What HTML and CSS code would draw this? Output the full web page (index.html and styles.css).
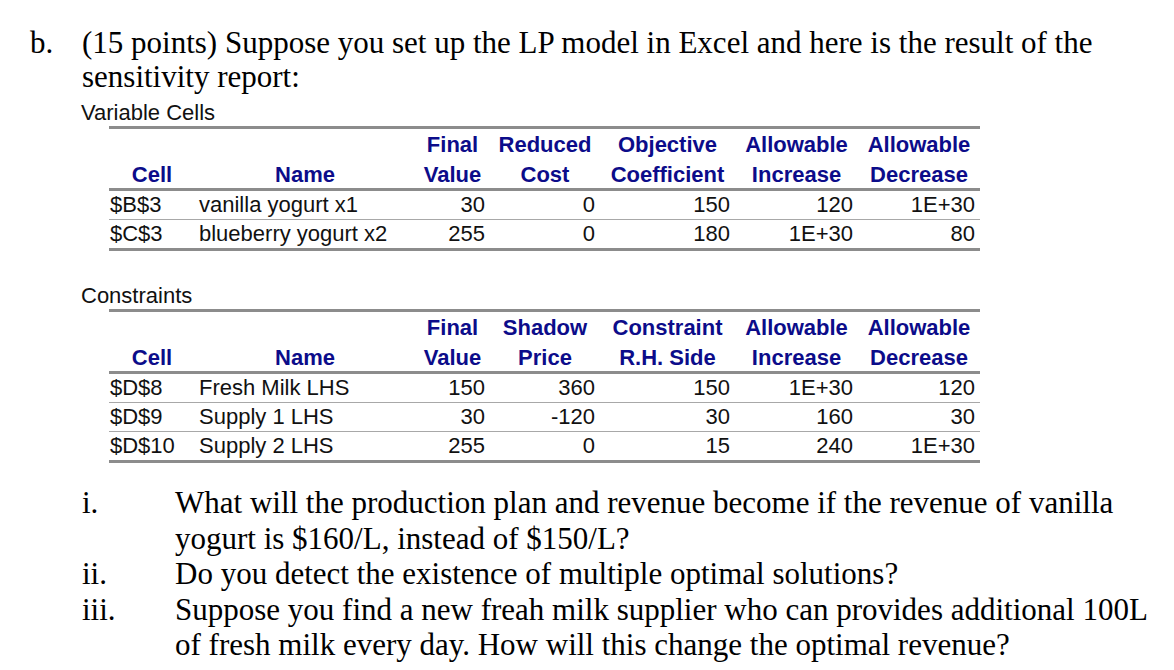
FILE: index.html
```html
<!DOCTYPE html>
<html>
<head>
<meta charset="utf-8">
<link rel="stylesheet" href="styles.css">
</head>
<body>
<div class="page">
  <div class="item">
    <span class="item-label">b.</span>
    <p class="item-text">(15 points) Suppose you set up the LP model in Excel and here is the result of the sensitivity report:</p>
  </div>

  <div class="section-title">Variable Cells</div>
  <table class="report">
    <colgroup>
      <col class="c-cell"><col class="c-name"><col class="c-final"><col class="c-red"><col class="c-obj"><col class="c-inc"><col class="c-dec">
    </colgroup>
    <thead>
      <tr class="h1"><th></th><th></th><th>Final</th><th>Reduced</th><th>Objective</th><th>Allowable</th><th>Allowable</th></tr>
      <tr class="h2"><th>Cell</th><th>Name</th><th>Value</th><th>Cost</th><th>Coefficient</th><th>Increase</th><th>Decrease</th></tr>
    </thead>
    <tbody>
      <tr><td class="l">$B$3</td><td class="n">vanilla yogurt x1</td><td>30</td><td>0</td><td>150</td><td>120</td><td>1E+30</td></tr>
      <tr><td class="l">$C$3</td><td class="n">blueberry yogurt x2</td><td>255</td><td>0</td><td>180</td><td>1E+30</td><td>80</td></tr>
    </tbody>
  </table>

  <div class="section-title s2">Constraints</div>
  <table class="report">
    <colgroup>
      <col class="c-cell"><col class="c-name"><col class="c-final"><col class="c-red"><col class="c-obj"><col class="c-inc"><col class="c-dec">
    </colgroup>
    <thead>
      <tr class="h1"><th></th><th></th><th>Final</th><th>Shadow</th><th>Constraint</th><th>Allowable</th><th>Allowable</th></tr>
      <tr class="h2"><th>Cell</th><th>Name</th><th>Value</th><th>Price</th><th>R.H. Side</th><th>Increase</th><th>Decrease</th></tr>
    </thead>
    <tbody>
      <tr><td class="l">$D$8</td><td class="n">Fresh Milk LHS</td><td>150</td><td>360</td><td>150</td><td>1E+30</td><td>120</td></tr>
      <tr><td class="l">$D$9</td><td class="n">Supply 1 LHS</td><td>30</td><td>-120</td><td>30</td><td>160</td><td>30</td></tr>
      <tr><td class="l">$D$10</td><td class="n">Supply 2 LHS</td><td>255</td><td>0</td><td>15</td><td>240</td><td>1E+30</td></tr>
    </tbody>
  </table>

  <ol class="questions">
    <li class="q"><span class="q-label">i.</span><span class="q-text">What will the production plan and revenue become if the revenue of vanilla yogurt is $160/L, instead of $150/L?</span></li>
    <li class="q"><span class="q-label">ii.</span><span class="q-text">Do you detect the existence of multiple optimal solutions?</span></li>
    <li class="q"><span class="q-label">iii.</span><span class="q-text">Suppose you find a new freah milk supplier who can provides additional 100L of fresh milk every day. How will this change the optimal revenue?</span></li>
  </ol>
</div>
</body>
</html>
```

FILE: styles.css
```css
html, body {
  margin: 0;
  padding: 0;
  background: #ffffff;
}

.page {
  padding: 26px 0 0 30px;
  color: #000000;
  font-family: "Liberation Serif", "Times New Roman", serif;
}

.item {
  display: flex;
  align-items: flex-start;
}

.item-label {
  width: 52px;
  flex: none;
  font-size: 31px;
  line-height: 34px;
}

.item-text {
  margin: 0;
  width: 1040px;
  font-size: 31px;
  line-height: 34px;
}

.section-title {
  font-family: "Liberation Sans", Arial, sans-serif;
  font-size: 22px;
  line-height: 26px;
  margin: 6px 0 0 51px;
  color: #111111;
}

.section-title.s2 {
  margin-top: 32px;
}

.report {
  margin: 0 0 0 79px;
  width: 871px;
  table-layout: fixed;
  border-collapse: collapse;
  font-family: "Liberation Sans", Arial, sans-serif;
  font-size: 22px;
  border-top: 3px solid #8c8c8c;
  border-bottom: 3px solid #8c8c8c;
}

.c-cell { width: 86px; }
.c-name { width: 220px; }
.c-final { width: 75px; }
.c-red { width: 110px; }
.c-obj { width: 135px; }
.c-inc { width: 123px; }
.c-dec { width: 122px; }

.report th {
  color: #0c0c8a;
  font-weight: bold;
  text-align: center;
  padding: 0;
  white-space: nowrap;
}

.report tr.h1 th {
  height: 28px;
  padding-top: 2px;
}

.report tr.h2 th {
  height: 25px;
  padding-top: 3px;
  border-bottom: 3px solid #8c8c8c;
}

.report td {
  height: 28px;
  padding: 0 5px 0 0;
  text-align: right;
  white-space: nowrap;
  border-top: 1px solid #a8a8a8;
  color: #111111;
}

.report tbody tr:first-child td {
  border-top: none;
}

.report td.l {
  text-align: left;
  padding-left: 1px;
}

.report td.n {
  text-align: left;
  padding-left: 4px;
}

.questions {
  list-style: none;
  margin: 22px 0 0 0;
  padding: 0;
}

.q {
  display: flex;
  align-items: flex-start;
  font-size: 31px;
  line-height: 35.5px;
}

.q-label {
  width: 93px;
  flex: none;
  padding-left: 52px;
}

.q-text {
  width: 985px;
}
```
